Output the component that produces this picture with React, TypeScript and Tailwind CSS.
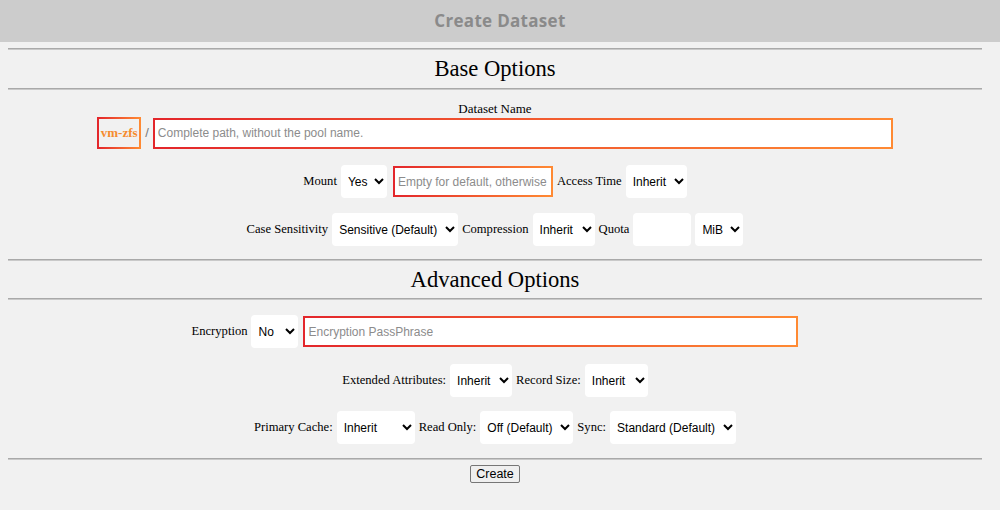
import React from "react";

const serif = "font-['Liberation_Serif','Times_New_Roman',serif]";
const sans = "font-['Liberation_Sans',Arial,sans-serif]";
const glow =
  "border-2 border-solid [border-image:linear-gradient(to_right,#e3262b,#ff8a33)_1]";

const Rule = ({ className = "" }: { className?: string }) => (
  <div className={`ml-2 mr-[8px] h-[2px] border-t border-b border-t-[#a9a9a9] border-b-[#c9c9c9] ${className}`} />
);

const Label = ({ children }: { children: React.ReactNode }) => (
  <span className={`${serif} text-[12.6px] text-black leading-[15px]`}>{children}</span>
);

const Select = ({ value, options, w }: { value: string; options: string[]; w: string }) => (
  <select
    defaultValue={value}
    className={`${sans} ${w} h-[33px] bg-white rounded-[4px] border-0 pl-[3px] text-[12px] text-black outline-none`}
  >
    {options.map((o) => (
      <option key={o}>{o}</option>
    ))}
  </select>
);

const Text = ({ placeholder, w, className = "" }: { placeholder: string; w: string; className?: string }) => (
  <input
    type="text"
    placeholder={placeholder}
    className={`${sans} ${w} ${glow} h-[31px] bg-white px-[3px] text-[12px] placeholder:text-[#8c8c8c] outline-none ${className}`}
  />
);

const Heading = ({ children, h }: { children: React.ReactNode; h: string }) => (
  <div className={`${serif} ${h} flex items-center justify-center text-[22.6px] text-black`}>{children}</div>
);

export default function App() {
  return (
    <div className="min-h-[510px] w-[1000px] bg-[#f1f1f1]">
      <div className="h-[42px] bg-[#cccccc] flex items-center justify-center">
        <span className="font-['Open_Sans',sans-serif] font-bold text-[17px] tracking-[0.3px] text-[#8a8a8a]">
          Create Dataset
        </span>
      </div>

      <div className="w-[990px]">
        <Rule className="mt-[6px]" />
        <Heading h="h-[38px]">Base Options</Heading>
        <Rule />

        <div className="pt-[11px] flex justify-center">
          <span className={`${serif} text-[13px] leading-[15px]`}>Dataset Name</span>
        </div>
        <div className="mt-[1px] flex justify-center items-center gap-[4px]">
          <div
            className={`${serif} ${glow} w-[44px] h-[32px] flex items-center justify-center text-[13px] font-semibold text-[#f58b2f]`}
          >
            vm-zfs
          </div>
          <span className={`${sans} text-[13px] text-[#777]`}>/</span>
          <Text placeholder="Complete path, without the pool name." w="w-[740px]" />
        </div>

        <div className="mt-[16px] flex justify-center items-center gap-1">
          <Label>Mount</Label>
          <Select value="Yes" options={["Yes", "No"]} w="w-[46px]" />
          <Text placeholder="Empty for default, otherwise" w="w-[160px]" className="ml-[2px]" />
          <Label>Access Time</Label>
          <Select value="Inherit" options={["Inherit", "On", "Off"]} w="w-[61px]" />
        </div>

        <div className="mt-[15px] flex justify-center items-center gap-1">
          <Label>Case Sensitivity</Label>
          <Select value="Sensitive (Default)" options={["Sensitive (Default)", "Insensitive", "Mixed"]} w="w-[126px]" />
          <Label>Compression</Label>
          <Select value="Inherit" options={["Inherit", "lz4", "Off"]} w="w-[62px]" />
          <Label>Quota</Label>
          <input type="text" className={`${sans} w-[58px] h-[33px] bg-white rounded-[4px] border-0 outline-none`} />
          <Select value="MiB" options={["MiB", "GiB", "TiB"]} w="w-[48px]" />
        </div>

        <Rule className="mt-[13px]" />
        <Heading h="h-[37px]">Advanced Options</Heading>
        <Rule />

        <div className="mt-[15px] flex justify-center items-center gap-1">
          <Label>Encryption</Label>
          <Select value="No" options={["No", "Yes"]} w="w-[47px]" />
          <Text placeholder="Encryption PassPhrase" w="w-[495px]" className="ml-[1px]" />
        </div>

        <div className="mt-[16px] flex justify-center items-center gap-[4px]">
          <Label>Extended Attributes:</Label>
          <Select value="Inherit" options={["Inherit", "On", "Off", "sa"]} w="w-[62px]" />
          <Label>Record Size:</Label>
          <Select value="Inherit" options={["Inherit", "128K", "1M"]} w="w-[63px]" />
        </div>

        <div className="mt-[14px] flex justify-center items-center gap-1">
          <Label>Primary Cache:</Label>
          <Select value="Inherit" options={["Inherit", "All", "Metadata", "None"]} w="w-[78px]" />
          <Label>Read Only:</Label>
          <Select value="Off (Default)" options={["Off (Default)", "On"]} w="w-[93px]" />
          <Label>Sync:</Label>
          <Select value="Standard (Default)" options={["Standard (Default)", "Always", "Disabled"]} w="w-[126px]" />
        </div>

        <Rule className="mt-[14px]" />
        <div className="mt-[5px] flex justify-center">
          <button
            className={`${sans} w-[50px] h-[18px] text-[12.5px] leading-[14px] text-black bg-[#efefef] border border-[#767676] rounded-[2px]`}
          >
            Create
          </button>
        </div>
      </div>
    </div>
  );
}
